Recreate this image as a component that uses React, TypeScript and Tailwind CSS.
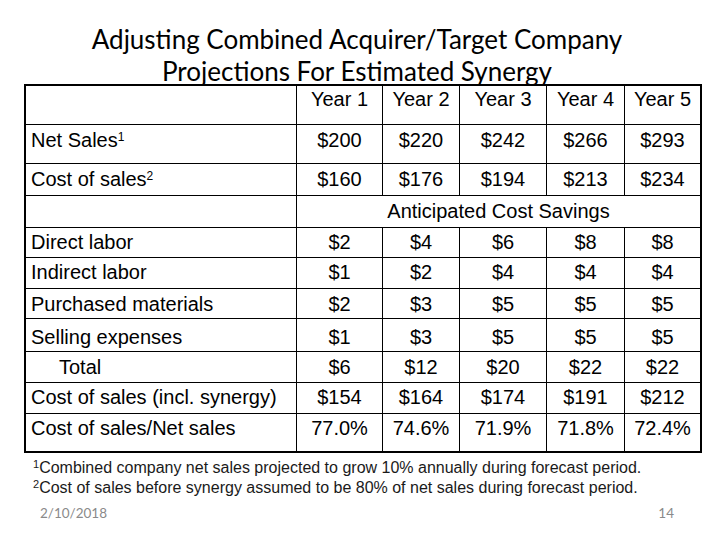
const rows = [
  { label: 'Net Sales', sup: '1', vals: ['$200', '$220', '$242', '$266', '$293'], h: 'h-[39px]', pt: 'pt-[4px]' },
  { label: 'Cost of sales', sup: '2', vals: ['$160', '$176', '$194', '$213', '$234'], h: 'h-[32px]', pt: 'pt-[4px]' },
  { label: '', span: 'Anticipated Cost Savings', h: 'h-[32px]', pt: 'pt-[4px]' },
  { label: 'Direct labor', vals: ['$2', '$4', '$6', '$8', '$8'], h: 'h-[30px]', pt: 'pt-[3px]' },
  { label: 'Indirect labor', vals: ['$1', '$2', '$4', '$4', '$4'], h: 'h-[31px]', pt: 'pt-[3px]' },
  { label: 'Purchased materials', vals: ['$2', '$3', '$5', '$5', '$5'], h: 'h-[30px]', pt: 'pt-[4px]' },
  { label: 'Selling expenses', vals: ['$1', '$3', '$5', '$5', '$5'], h: 'h-[33px]', pt: 'pt-[7px]' },
  { label: 'Total', indent: true, vals: ['$6', '$12', '$20', '$22', '$22'], h: 'h-[31px]', pt: 'pt-[4px]' },
  { label: 'Cost of sales (incl. synergy)', vals: ['$154', '$164', '$174', '$191', '$212'], h: 'h-[31px]', pt: 'pt-[3px]' },
  { label: 'Cost of sales/Net sales', vals: ['77.0%', '74.6%', '71.9%', '71.8%', '72.4%'], h: 'h-[37px]', pt: 'pt-[3px]', last: true },
];

const years = ['Year 1', 'Year 2', 'Year 3', 'Year 4', 'Year 5'];
const colW = ['w-[86px]', 'w-[77px]', 'w-[87px]', 'w-[78px]', 'w-[75px]'];

function Cell({ children, className }: { children?: React.ReactNode; className: string }) {
  return <div className={`shrink-0 leading-[23px] ${className}`}>{children}</div>;
}

export default function App() {
  return (
    <main className="relative h-[540px] w-[720px] overflow-hidden bg-white text-black">
      <div
        className="h-[84px] w-[714px] pt-[23px] text-center text-[26px] leading-[32px] text-black"
        style={{ fontFamily: 'Lato, "Open Sans", sans-serif' }}
      >
        <div>Adjusting Combined Acquirer/Target Company</div>
        <div>Projections For Estimated Synergy</div>
      </div>

      <div
        className="ml-[24px] w-[678px] border-2 border-black text-[20px]"
        style={{ fontFamily: '"Liberation Sans", Arial, sans-serif' }}
      >
        <div className="flex h-[39px] border-b border-black">
          <Cell className="w-[271px] border-r border-black" />
          {years.map((y, i) => (
            <Cell key={y} className={`${colW[i]} pt-[2px] text-center ${i < 4 ? 'border-r border-black' : ''}`}>
              {y}
            </Cell>
          ))}
        </div>
        {rows.map((r, ri) => (
          <div key={ri} className={`flex ${r.h} ${r.last ? '' : 'border-b border-black'}`}>
            <Cell className={`w-[271px] border-r border-black ${r.pt} ${r.indent ? 'pl-[33px]' : 'pl-[5px]'}`}>
              {r.label}
              {r.sup && <sup className="text-[12px]">{r.sup}</sup>}
            </Cell>
            {r.span ? (
              <Cell className={`w-[403px] text-center ${r.pt}`}>{r.span}</Cell>
            ) : (
              r.vals!.map((v, i) => (
                <Cell key={i} className={`${colW[i]} ${r.pt} text-center ${i < 4 ? 'border-r border-black' : ''}`}>
                  {v}
                </Cell>
              ))
            )}
          </div>
        ))}
      </div>

      <div
        className="ml-[33px] mt-[5px] text-[16px] leading-[20px] text-[#1a1a1a]"
        style={{ fontFamily: '"Liberation Sans", Arial, sans-serif' }}
      >
        <div>
          <sup className="text-[11px]">1</sup>Combined company net sales projected to grow 10% annually during forecast period.
        </div>
        <div>
          <sup className="text-[11px]">2</sup>Cost of sales before synergy assumed to be 80% of net sales during forecast period.
        </div>
      </div>

      <div
        className="mt-[5px] flex w-[674px] justify-between pl-[40px] text-[13.5px] text-[#8a8a8a]"
        style={{ fontFamily: 'Lato, "Open Sans", sans-serif' }}
      >
        <span>2/10/2018</span>
        <span>14</span>
      </div>
    </main>
  );
}
